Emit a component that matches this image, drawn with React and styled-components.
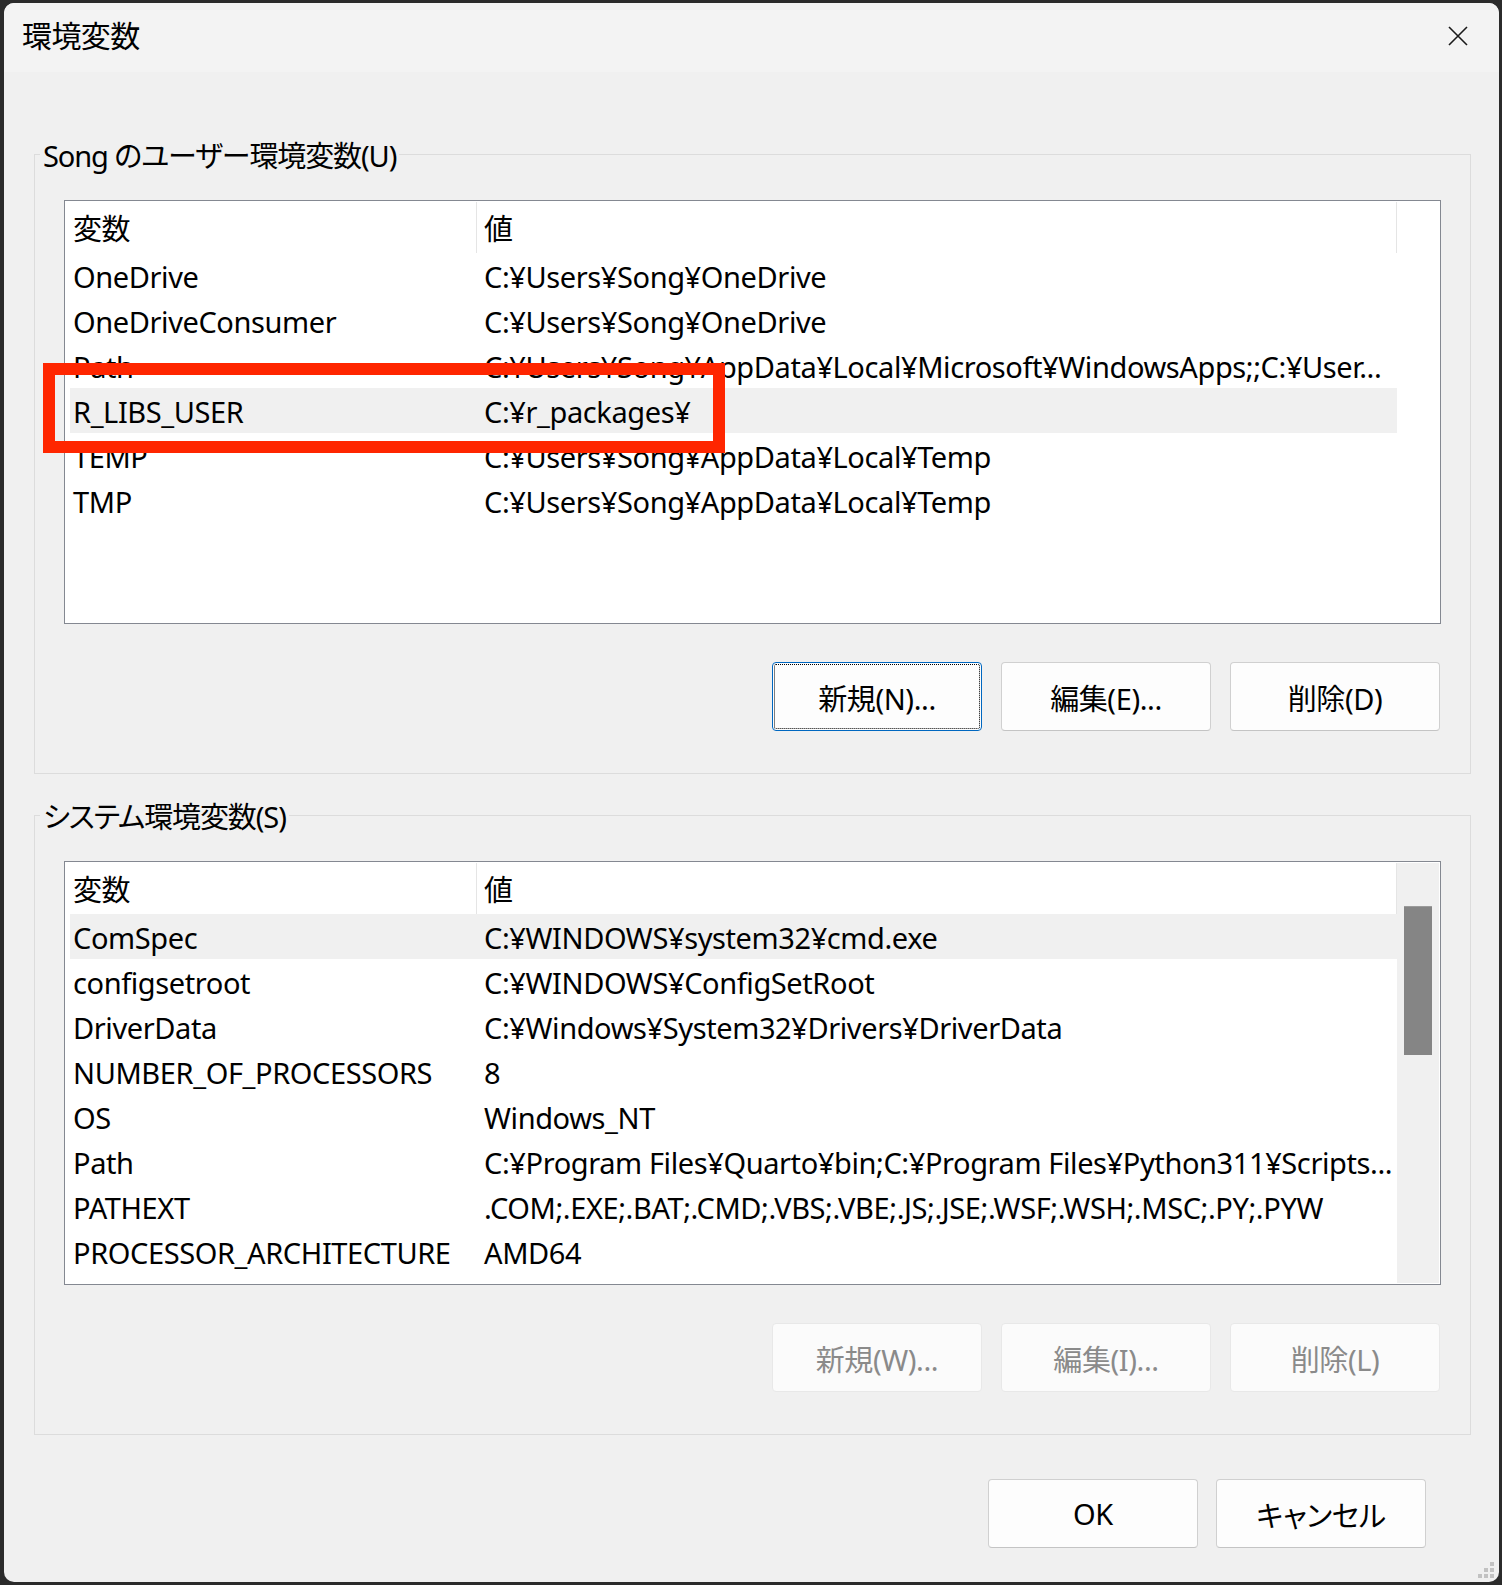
import React from 'react';
import styled, { createGlobalStyle, css } from 'styled-components';

const GlobalStyle = createGlobalStyle`
  html, body {
    margin: 0;
    padding: 0;
  }
  body {
    background: #2b2b2b;
    font-family: "Noto Sans", "Noto Sans CJK JP", sans-serif;
    font-size: 29px;
    letter-spacing: -0.4px;
    font-feature-settings: "palt";
    color: #000;
  }
`;

const Screen = styled.div`
  width: 1502px;
  height: 1585px;
  box-sizing: border-box;
  padding: 3px 3px 3px 4px;
`;

const Window = styled.div`
  position: relative;
  width: 1495px;
  height: 1579px;
  background: #f0f0f0;
  border-radius: 10px;
  overflow: hidden;
  display: flex;
  flex-direction: column;
`;

const TitleBar = styled.div`
  height: 69px;
  flex: none;
  box-sizing: border-box;
  background: #f3f3f3;
  display: flex;
  align-items: center;
  justify-content: space-between;
  padding: 0 31px 4px 18px;
`;

const Title = styled.div`
  font-size: 30px;
  line-height: 1;
  letter-spacing: -0.6px;
`;

const CloseIcon = styled.svg`
  width: 20px;
  height: 20px;
  display: block;
`;

const Body = styled.div`
  display: flex;
  flex-direction: column;
  padding: 62px 28px 0 30px;
`;

const GroupBox = styled.fieldset`
  margin: 0;
  padding: 0;
  min-width: 0;
  border: 1px solid #dcdcdc;

  & + & {
    margin-top: 21px;
  }
`;

const Legend = styled.legend`
  margin-left: 5px;
  padding: 4px 3px 0 3px;
  line-height: 36px;
  letter-spacing: -1.1px;
`;

const GroupContent = styled.div`
  padding: 26px 29px 42px 29px;
`;

const List = styled.div`
  height: 424px;
  box-sizing: border-box;
  border: 1px solid #848891;
  padding: 1px;
  background: #fff;
  display: flex;
  overflow: hidden;
`;

const ListBody = styled.div`
  flex: 1;
  padding-left: 4px;
  overflow: hidden;
`;

const HeaderRow = styled.div`
  display: flex;
  height: 51px;
`;

const HeaderCell = styled.div`
  flex: none;
  width: ${p => p.$width}px;
  box-sizing: border-box;
  padding: 2px 0 0 ${p => p.$pad}px;
  line-height: 49px;
  border-right: 1px solid #e5e5e5;
`;

const Row = styled.div`
  display: flex;
  width: 1327px;
  height: 45px;
  background: ${p => (p.$selected ? '#f0f0f0' : 'transparent')};
`;

const Cell = styled.div`
  flex: none;
  width: ${p => p.$width}px;
  box-sizing: border-box;
  padding: 3px 0 0 ${p => p.$pad}px;
  line-height: 42px;
  white-space: nowrap;
  overflow: hidden;
`;

const Scrollbar = styled.div`
  flex: none;
  width: 42px;
  background: #f0f0f0;
  display: flex;
  justify-content: center;
`;

const Thumb = styled.div`
  width: 28px;
  height: 149px;
  margin-top: 43px;
  box-sizing: border-box;
  background: #858585;
  border-top: 1px solid #9b9b9b;
`;

const ButtonRow = styled.div`
  display: flex;
  justify-content: flex-end;
  gap: ${p => p.$gap}px;
  margin-top: ${p => p.$top}px;
  padding-right: ${p => p.$right}px;
`;

const Button = styled.button`
  width: 210px;
  height: 69px;
  box-sizing: border-box;
  padding: 0;
  border-radius: 4px;
  border: 1px solid #d0d0d0;
  border-bottom-color: #c4c4c4;
  background: #fdfdfd;
  font: inherit;
  letter-spacing: inherit;
  font-feature-settings: inherit;
  color: #000;

  ${p =>
    p.$focused &&
    css`
      border-color: #0067c0;
      outline: 1px dotted #000;
      outline-offset: -3px;
    `}

  &:disabled {
    background: #fbfbfb;
    border-color: #e8e8e8;
    color: #8a8a8a;
  }
`;

const Marker = styled.div`
  position: absolute;
  left: 39px;
  top: 360px;
  width: 682px;
  height: 90px;
  box-sizing: border-box;
  border: 12px solid #ff2600;
  pointer-events: none;
`;

const Grip = styled.svg`
  position: absolute;
  right: 4px;
  bottom: 3px;
  width: 18px;
  height: 18px;
`;

const userVars = [
  ['OneDrive', 'C:¥Users¥Song¥OneDrive'],
  ['OneDriveConsumer', 'C:¥Users¥Song¥OneDrive'],
  ['Path', 'C:¥Users¥Song¥AppData¥Local¥Microsoft¥WindowsApps;;C:¥User...'],
  ['R_LIBS_USER', 'C:¥r_packages¥'],
  ['TEMP', 'C:¥Users¥Song¥AppData¥Local¥Temp'],
  ['TMP', 'C:¥Users¥Song¥AppData¥Local¥Temp'],
];

const systemVars = [
  ['ComSpec', 'C:¥WINDOWS¥system32¥cmd.exe'],
  ['configsetroot', 'C:¥WINDOWS¥ConfigSetRoot'],
  ['DriverData', 'C:¥Windows¥System32¥Drivers¥DriverData'],
  ['NUMBER_OF_PROCESSORS', '8'],
  ['OS', 'Windows_NT'],
  ['Path', 'C:¥Program Files¥Quarto¥bin;C:¥Program Files¥Python311¥Scripts...'],
  ['PATHEXT', '.COM;.EXE;.BAT;.CMD;.VBS;.VBE;.JS;.JSE;.WSF;.WSH;.MSC;.PY;.PYW'],
  ['PROCESSOR_ARCHITECTURE', 'AMD64'],
];

const VarList = ({ rows, selected, scroll }) => (
  <List>
    <ListBody>
      <HeaderRow>
        <HeaderCell $width={407} $pad={3}>変数</HeaderCell>
        <HeaderCell $width={920} $pad={7}>値</HeaderCell>
      </HeaderRow>
      {rows.map(([name, value]) => (
        <Row key={name} $selected={name === selected}>
          <Cell $width={407} $pad={3}>{name}</Cell>
          <Cell $width={920} $pad={7}>{value}</Cell>
        </Row>
      ))}
    </ListBody>
    {scroll && (
      <Scrollbar>
        <Thumb />
      </Scrollbar>
    )}
  </List>
);

const App = () => {
  return (
    <>
      <GlobalStyle />
      <Screen>
        <Window>
          <TitleBar>
            <Title>環境変数</Title>
            <CloseIcon viewBox="0 0 20 20">
              <path d="M1 1 L19 19 M19 1 L1 19" stroke="#1a1a1a" strokeWidth="1.6" fill="none" />
            </CloseIcon>
          </TitleBar>
          <Body>
            <GroupBox>
              <Legend>Song のユーザー環境変数(U)</Legend>
              <GroupContent>
                <VarList rows={userVars} selected="R_LIBS_USER" />
                <ButtonRow $gap={19} $top={38} $right={1}>
                  <Button $focused>新規(N)...</Button>
                  <Button>編集(E)...</Button>
                  <Button>削除(D)</Button>
                </ButtonRow>
              </GroupContent>
            </GroupBox>
            <GroupBox>
              <Legend>システム環境変数(S)</Legend>
              <GroupContent>
                <VarList rows={systemVars} selected="ComSpec" scroll />
                <ButtonRow $gap={19} $top={38} $right={1}>
                  <Button disabled>新規(W)...</Button>
                  <Button disabled>編集(I)...</Button>
                  <Button disabled>削除(L)</Button>
                </ButtonRow>
              </GroupContent>
            </GroupBox>
            <ButtonRow $gap={18} $top={44} $right={45}>
              <Button>OK</Button>
              <Button>キャンセル</Button>
            </ButtonRow>
          </Body>
          <Marker />
          <Grip viewBox="0 0 18 18">
            <rect x="13" y="1" width="4" height="4" fill="#c2c2c2" />
            <rect x="7" y="7" width="4" height="4" fill="#c2c2c2" />
            <rect x="13" y="7" width="4" height="4" fill="#c2c2c2" />
            <rect x="1" y="13" width="4" height="4" fill="#c2c2c2" />
            <rect x="7" y="13" width="4" height="4" fill="#c2c2c2" />
            <rect x="13" y="13" width="4" height="4" fill="#c2c2c2" />
          </Grip>
        </Window>
      </Screen>
    </>
  );
};

export default App;
